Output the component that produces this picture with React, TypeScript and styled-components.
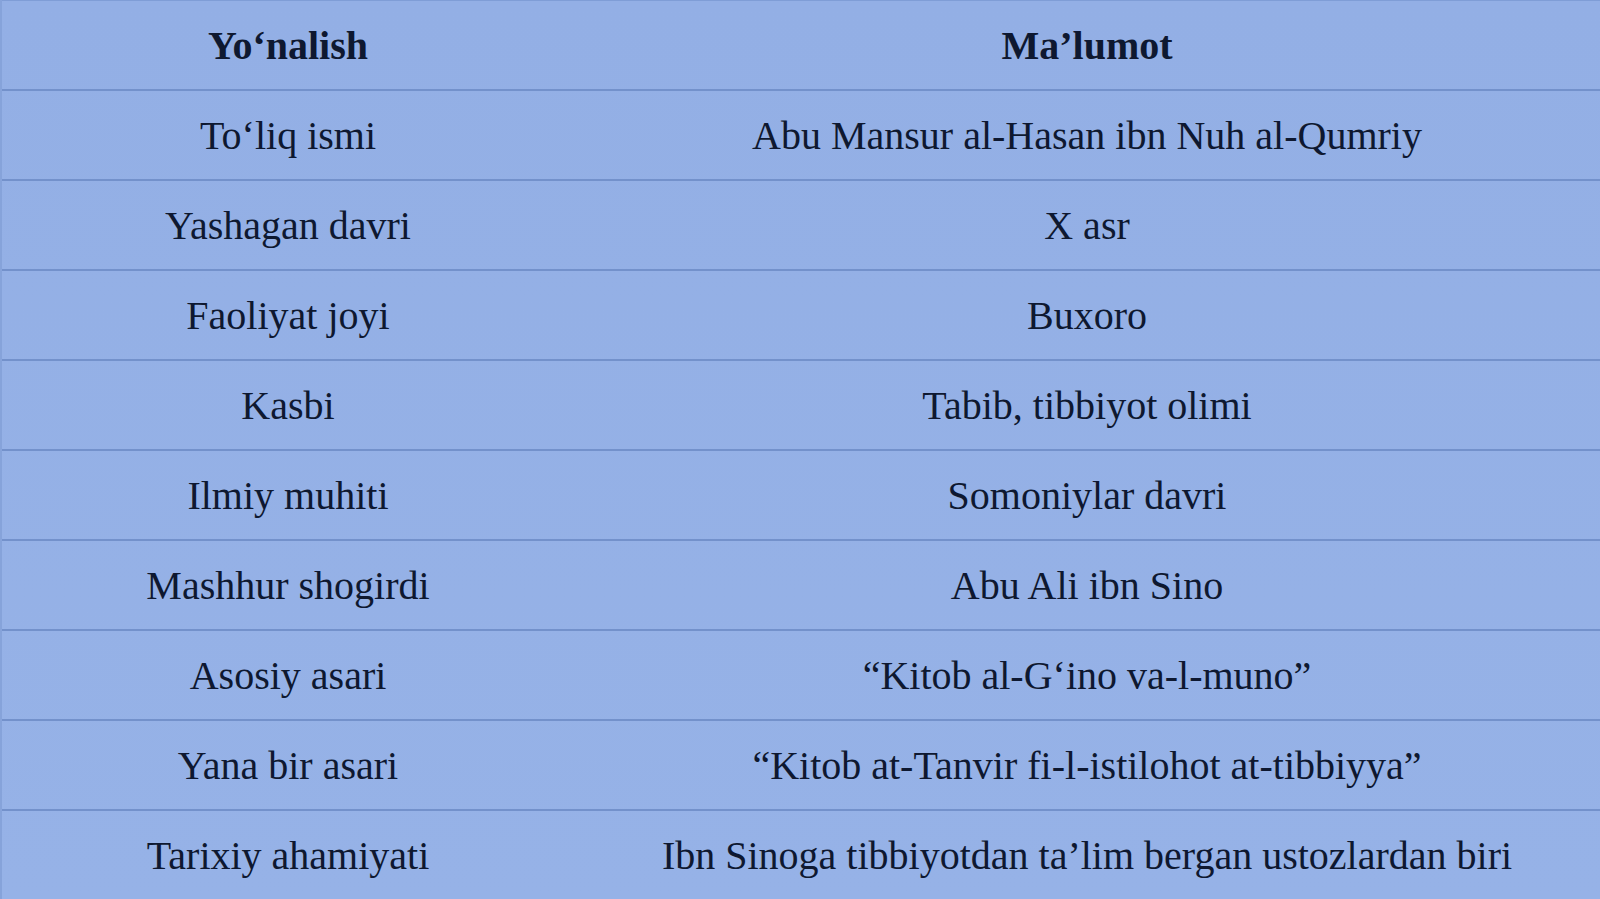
import styled, { createGlobalStyle } from 'styled-components';

const GlobalStyle = createGlobalStyle`
  html, body {
    margin: 0;
    padding: 0;
    background: #94b0e6;
    overflow: hidden;
  }
  #root {
    min-height: 100vh;
  }
`;

const rows: [string, string][] = [
  ['To‘liq ismi', 'Abu Mansur al-Hasan ibn Nuh al-Qumriy'],
  ['Yashagan davri', 'X asr'],
  ['Faoliyat joyi', 'Buxoro'],
  ['Kasbi', 'Tabib, tibbiyot olimi'],
  ['Ilmiy muhiti', 'Somoniylar davri'],
  ['Mashhur shogirdi', 'Abu Ali ibn Sino'],
  ['Asosiy asari', '“Kitob al-G‘ino va-l-muno”'],
  ['Yana bir asari', '“Kitob at-Tanvir fi-l-istilohot at-tibbiyya”'],
  ['Tarixiy ahamiyati', 'Ibn Sinoga tibbiyotdan ta’lim bergan ustozlardan biri'],
];

export default function App() {
  return (
    <>
      <GlobalStyle />
      <Page>
        <Table>
          <Row>
            <Cell $head>Yo‘nalish</Cell>
            <Cell $head>Ma’lumot</Cell>
          </Row>
          {rows.map(([a, b]) => (
            <Row key={a}>
              <Cell>{a}</Cell>
              <Cell>{b}</Cell>
            </Row>
          ))}
        </Table>
      </Page>
    </>
  );
}

const Page = styled.div`
  width: 100%;
  height: 100vh;
  overflow: hidden;
  background: linear-gradient(180deg, #93afe5 0%, #96b2e7 100%);
  border-left: 2px solid #86a3da;
  box-sizing: border-box;
`;

const Table = styled.div`
  display: flex;
  flex-direction: column;
  border-top: 1px solid #7f9dd6;
`;

const Row = styled.div`
  display: grid;
  grid-template-columns: 572px 1fr;
  height: 90px;
  box-sizing: border-box;
  border-bottom: 2px solid #7391cb;
`;

const Cell = styled.div<{ $head?: boolean }>`
  display: flex;
  align-items: center;
  justify-content: center;
  font-family: 'Liberation Serif', 'Times New Roman', serif;
  font-size: 40px;
  font-weight: ${(p) => (p.$head ? 700 : 400)};
  color: #0e1830;
  white-space: nowrap;
`;
